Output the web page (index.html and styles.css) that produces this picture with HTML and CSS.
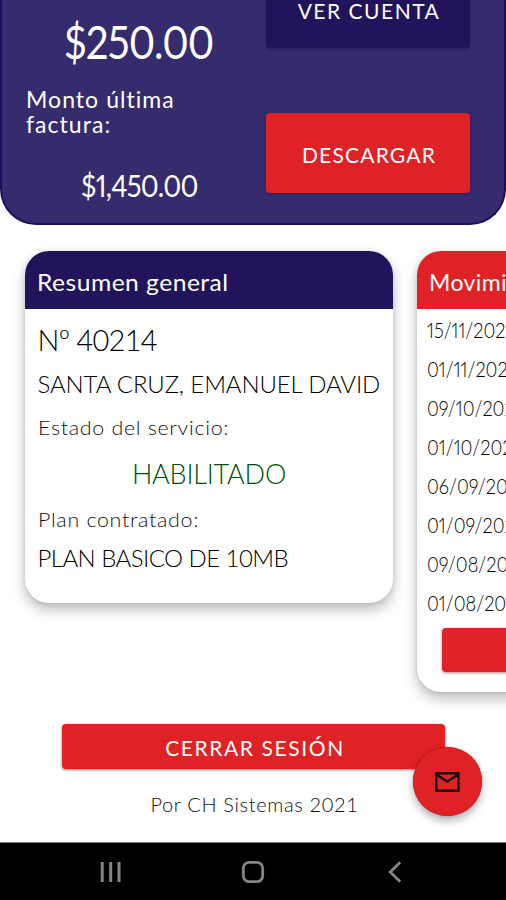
FILE: index.html
```html
<!DOCTYPE html>
<html lang="es">
<head>
<meta charset="utf-8">
<title>Resumen de cuenta</title>
<link rel="stylesheet" href="styles.css">
</head>
<body>
<div class="screen">
  <section class="account">
    <div class="amounts">
      <div class="balance"><span>$250.00</span></div>
      <div class="caption">Monto última factura:</div>
      <div class="invoice"><span>$1,450.00</span></div>
    </div>
    <div class="actions">
      <button class="btn navy"><span>VER CUENTA</span></button>
      <button class="btn red"><span>DESCARGAR</span></button>
    </div>
  </section>
  <main class="cards">
    <section class="card summary">
      <h2><span class="wide">Resumen general</span></h2>
      <div class="summary-body">
        <p class="number">Nº 40214</p>
        <p class="client">SANTA CRUZ, EMANUEL DAVID</p>
        <p class="label"><span class="wide">Estado del servicio:</span></p>
        <p class="status">HABILITADO</p>
        <p class="label"><span class="wide">Plan contratado:</span></p>
        <p class="plan">PLAN BASICO DE 10MB</p>
      </div>
    </section>
    <section class="card movements">
      <h2>Movimientos</h2>
      <ul>
        <li><span>15/11/2021</span></li>
        <li><span>01/11/2021</span></li>
        <li><span>09/10/2021</span></li>
        <li><span>01/10/2021</span></li>
        <li><span>06/09/2021</span></li>
        <li><span>01/09/2021</span></li>
        <li><span>09/08/2021</span></li>
        <li><span>01/08/2021</span></li>
      </ul>
      <div class="more"></div>
    </section>
  </main>
  <footer class="footer">
    <button class="logout"><span>CERRAR SESIÓN</span></button>
    <p class="credit">Por CH Sistemas 2021</p>
    <button class="mail" aria-label="Mensajes">
      <svg width="27" height="22" viewBox="0 0 27 22"><path d="M2.2 2.2h22.3v17.6H2.2zM2.2 3.6l11.1 7 11.2-7" fill="none" stroke="#1c0808" stroke-width="2.4" stroke-linejoin="round"/></svg>
    </button>
  </footer>
  <nav class="navbar">
    <svg width="22" height="22" viewBox="0 0 22 22"><path d="M2.2 1v20M10.7 1v20M19 1v20" stroke="#858585" stroke-width="3"/></svg>
    <svg width="24" height="24" viewBox="0 0 24 24"><rect x="2.3" y="2.3" width="19.4" height="19.4" rx="6" fill="none" stroke="#858585" stroke-width="2.8"/></svg>
    <svg width="14" height="22" viewBox="0 0 14 22"><path d="M12.2 1.2L2.2 11l10 9.8" fill="none" stroke="#858585" stroke-width="2.8"/></svg>
  </nav>
</div>
</body>
</html>
```
FILE: styles.css
```css
* { box-sizing: border-box; margin: 0; padding: 0; }
body { background: #fff; font-family: Lato, "Open Sans", sans-serif; }
button { border: 0; font: inherit; color: inherit; }
span, p, h2 { white-space: nowrap; }
.screen { width: 506px; height: 900px; overflow: hidden; display: flex; flex-direction: column; }

.account {
  height: 225px; flex: none; display: flex; justify-content: space-between;
  padding: 0 34px 0 24px; background: #352b6d; color: #fff;
  border: 2px solid #1d0d60; border-top: 0; border-radius: 0 0 36px 36px;
}
.amounts { width: 226px; }
.balance, .invoice { font-variant-numeric: proportional-nums; }
.balance span, .invoice span, .movements li span, .wide { display: inline-block; transform-origin: 0 50%; }
.balance { height: 84px; line-height: 83px; padding-left: 38px; font-size: 46px; letter-spacing: -1px; }
.balance span { transform: scaleX(.875); }
.caption { width: 170px; height: 54px; padding-top: 3px; line-height: 25px; font-size: 23px; letter-spacing: 1.05px; }
.invoice { height: 86px; line-height: 94px; padding-left: 55px; font-size: 30px; letter-spacing: -.8px; }
.invoice span { transform: scaleX(.91); }
.actions { width: 204px; }
.btn { display: flex; align-items: center; justify-content: center; width: 204px; border-radius: 4px; font-size: 21px; letter-spacing: 1.5px; }
.navy { height: 48px; padding: 0 0 28px 2px; background: #21145b; border-radius: 0 0 4px 4px; box-shadow: 0 1px 3px #261b60; }
.red { height: 80px; margin-top: 65px; padding: 3px 0 0 2px; background: #df2225; box-shadow: 0 1px 2px #2b205f; letter-spacing: 1.2px; }

.cards { height: 467px; flex: none; display: flex; align-items: flex-start; gap: 24px; padding: 26px 0 0 25px; }
.card { width: 368px; flex: none; border-radius: 24px; background: #fff; box-shadow: 0 7px 14px rgba(0,0,0,.25), 0 1px 5px rgba(0,0,0,.1); }
.card h2 { height: 58px; line-height: 63px; padding-left: 12px; border-radius: 24px 24px 0 0; color: #fff; font-size: 23px; font-weight: 400; }
.wide { transform: scaleX(1.07); }
.summary { height: 352px; }
.summary h2 { background: #21145b; letter-spacing: .45px; }
.movements { height: 441px; }
.movements h2 { background: #df2225; letter-spacing: .4px; }
.summary-body { padding: 8px 12.5px; font-weight: 300; color: #000; }
.number { height: 44px; line-height: 45px; font-size: 29px; letter-spacing: -.8px; }
.client { height: 44px; line-height: 45px; font-size: 24px; letter-spacing: -.13px; }
.label { height: 44px; line-height: 44px; font-size: 20px; letter-spacing: .65px; color: #111; }
.status { height: 48px; line-height: 50px; font-size: 27px; letter-spacing: -.2px; color: #004d0c; text-align: center; }
.plan { height: 34px; line-height: 34px; font-size: 24px; letter-spacing: -.55px; }
.movements ul { list-style: none; padding: 1px 0 0 10px; height: 319px; font-size: 21px; font-weight: 300; color: #000; font-variant-numeric: proportional-nums; }
.movements li { height: 39px; line-height: 39px; }
.movements li span { transform: scaleX(.87); }
.more { height: 44px; margin: 0 25px; border-radius: 4px; background: #df2225; box-shadow: 0 1px 3px rgba(120,0,0,.5); }

.footer { position: relative; height: 150px; flex: none; padding: 32px 61px 0 62px; }
.logout { display: flex; align-items: center; justify-content: center; width: 383px; height: 45px; padding: 2px 0 0 3px; border-radius: 4px; background: #df2225; box-shadow: 0 1px 3px rgba(80,0,0,.55); color: #fff; font-size: 21px; letter-spacing: 1.6px; }
.credit { height: 70px; line-height: 70px; padding-left: 2px; text-align: center; font-size: 20px; letter-spacing: .65px; font-weight: 300; color: #111; }
.mail { position: absolute; left: 413px; top: 55px; width: 69px; height: 69px; display: flex; align-items: center; justify-content: center; border-radius: 50%; background: #df2225; box-shadow: 0 5px 9px rgba(0,0,0,.3), 0 0 1px #900; }

.navbar { height: 58px; flex: none; display: grid; grid-template-columns: 142px 142px 142px; justify-content: center; justify-items: center; align-items: center; border-top: 1px solid #777; background: #000; }
```
